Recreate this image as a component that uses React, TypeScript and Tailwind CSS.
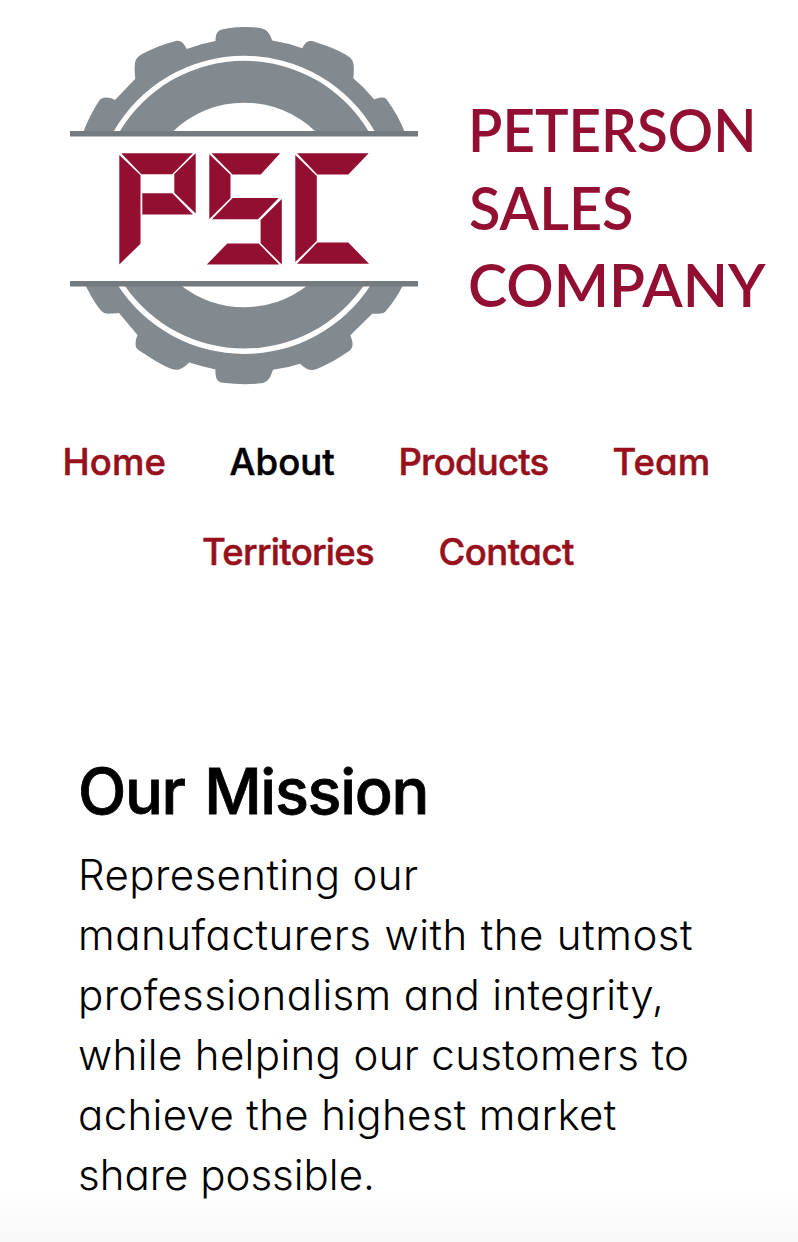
function Logo() {
  return (
    <svg className="block h-[400px] w-[798px]" viewBox="0 0 798 400" role="img" aria-label="Peterson Sales Company">
      <g fill="#82898f">
        <path d="M83.3 132C87 122 93 110 99.3 100.500C102 97 108 96.500 115 100L135.300 78.700C134.700 74 134.300 68 135 62.500C136 58 139 55.500 144 53C154 48 164 44 175 41.200C181 39.800 183.500 43 186.700 49Q201 43.500 215.500 41C215.500 33 218 30.500 222 29.500C232 26.500 252 26.200 261 28.300C268.500 30 270 35 272.300 40.500Q288 43 302.300 48.200C305 42.500 308 40 313 41.200C325 45 336 49 346 54.800C351 58 353 60 353.600 65C354.200 70 353.600 74 353.300 78.300Q365 88 374.300 99.500C382 96.500 386 97 388 101.500Q398 115 404.700 132Z" />
        <path d="M85.500 285.500C90 294 95 304 101.500 311C105 315 111 313.500 119 313L137.700 335.200C135.500 339 135.500 342 135.700 346C136 350 144 353 150 357.500C157 362 164 366 171 368.800C178 371.500 182 369 189.300 362.500Q202 366.500 215.500 369.500C215 378 217 382.300 223 382.800Q240 384.800 256 383.800C270 383.500 270 377 273 369.800Q287 368 300 363.700C307 370 311 371.500 318 368.500C329 364 339 357.500 348 351.700C355 347.500 352.500 341 350.300 335.300L372.300 313.700C382 314 384 314 387.500 309Q396 299 402.800 285.500Z" />
      </g>
      <path d="M113.300 132A150.500 150.500 0 0 1 375.100 132H369A145 145 0 0 0 119.400 132ZM172.300 132A102.800 102.800 0 0 1 316.100 132ZM118 285.500A150.500 150.500 0 0 0 370.400 285.500H363.800A145 145 0 0 1 124.600 285.500ZM181 285.500A102.800 102.800 0 0 0 307.400 285.500Z" fill="#fff" />
      <path d="M70 131h348v5.600H70zM70 281h348v5.600H70z" fill="#737b80" />
      <g fill="#920f31">
        <path d="M119.300 155L140.500 175.300V243.700L119.300 264.500ZM121.300 153.200H192.900L172.300 174.200H141.300ZM195.700 153.200V213.500L174.300 192.700V174ZM142.300 193.200H172.300L193 214.500H142.300Z" />
        <path d="M209.300 154.300L230.500 174.700V198L209.300 219ZM211.500 153.200H280.200L260.700 174.400H232.500ZM232.700 198H278.800L258 219.300H212ZM281.800 199V264.500L260.600 243.300V220ZM227.300 243.400H258.700L279.200 264.600H206.800Z" />
        <path d="M295.300 155L316.800 176V241L295.300 262ZM297 153.200H368.700L348.300 174.400H317.300ZM317.300 242.600H348.300L369 263.700H297Z" />
      </g>
      <g fill="#920f31" className="font-['Lato'] text-[60px] font-semibold">
        <text x="468" y="151.500" textLength="288.500" lengthAdjust="spacingAndGlyphs">PETERSON</text>
        <text x="469" y="229.500" textLength="164.500" lengthAdjust="spacingAndGlyphs">SALES</text>
        <text x="468" y="306.700" textLength="297.500" lengthAdjust="spacingAndGlyphs">COMPANY</text>
      </g>
    </svg>
  );
}

export default function App() {
  return (
    <div className="h-[1242px] w-[798px] overflow-hidden bg-white font-['Inter',sans-serif] text-black [font-feature-settings:'cv11']">
      <header>
        <Logo />
        <nav className="flex flex-col pt-[17px] text-[36.500px] leading-[90px] font-medium whitespace-nowrap text-[#97101c] [-webkit-text-stroke:0.5px]">
          <div className="flex">
            <a className="ml-[62.500px] w-[167px] tracking-[0.1px]">Home</a>
            <a className="w-[169px] tracking-[0.1px] text-black">About</a>
            <a className="w-[214px] tracking-[-0.8px]">Products</a>
            <a className="tracking-[0.1px]">Team</a>
          </div>
          <div className="flex">
            <a className="ml-[202px] w-[236.500px] tracking-[-0.7px]">Territories</a>
            <a className="tracking-[-0.5px]">Contact</a>
          </div>
        </nav>
      </header>
      <main className="pt-[149px] pl-[78px] whitespace-nowrap">
        <h1 className="text-[63px] leading-[90px] font-medium tracking-[-1.3px] [word-spacing:4px] [-webkit-text-stroke:0.8px]">Our Mission</h1>
        <p className="mt-[9px] flex flex-col text-[42px] leading-[60px] font-light">
          <span className="tracking-[0.4px]">Representing our</span>
          <span className="tracking-[0.55px] [word-spacing:0.5px]">manufacturers with the utmost</span>
          <span className="tracking-[0.35px]">professionalism and integrity,</span>
          <span className="tracking-[0.35px]">while helping our customers to</span>
          <span className="tracking-[0.35px]">achieve the highest market</span>
          <span>share possible.</span>
        </p>
      </main>
      <div className="mt-[-15px] h-[52px] bg-gradient-to-b from-white to-[#f8f8f8]" />
    </div>
  );
}
